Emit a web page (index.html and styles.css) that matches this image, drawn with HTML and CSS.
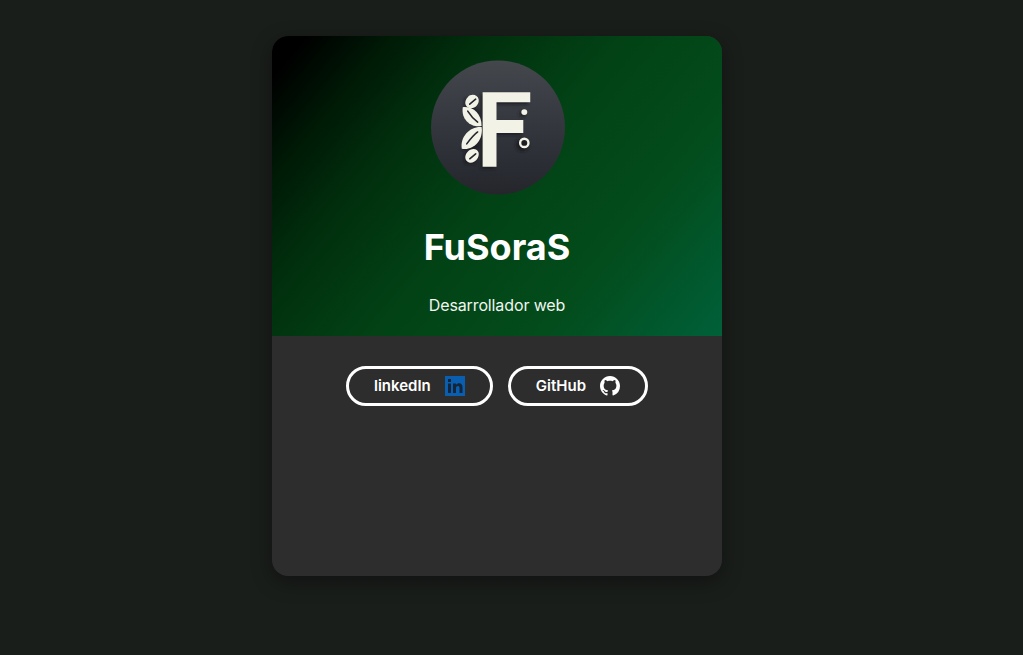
FILE: index.html
```html
<!DOCTYPE html>
<html lang="es">
<head>
<meta charset="utf-8">
<title>FuSoraS</title>
<link rel="stylesheet" href="styles.css">
</head>
<body>
<main class="card">
  <header class="hero">
    <svg class="avatar" viewBox="0 0 135 135" role="img" aria-label="Logo FuSoraS">
      <defs>
        <linearGradient id="disc" x1="0.5" y1="0" x2="0.5" y2="1">
          <stop offset="0" stop-color="#44474c"/>
          <stop offset="0.5" stop-color="#33363d"/>
          <stop offset="1" stop-color="#24262c"/>
        </linearGradient>
        <filter id="soft" x="-20%" y="-20%" width="140%" height="140%">
          <feGaussianBlur stdDeviation="1.5"/>
        </filter>
      </defs>
      <circle cx="67.5" cy="67.5" r="67.5" fill="url(#disc)"/>
      <g transform="translate(-2 2)" fill="#14161a" opacity="0.75" filter="url(#soft)">
        <path d="M52 32H100V42H66V60H93V73H66V107H52Z"/>
        <circle cx="94" cy="83" r="6.500"/>
        <circle cx="94" cy="52" r="3"/>
        <path d="M33 47L50 65V47Z M32 88L50 67V88Z M36 36H47V48H36Z M36 90H47V102H36Z"/>
      </g>
      <path class="mark" d="M52 32H100V42H66V60H93V73H66V107H52Z"/>
      <circle class="mark" cx="94" cy="52" r="3"/>
      <circle class="ring" cx="94" cy="83" r="4.200"/>
      <path class="mark" d="M37 37C40 33 47 34 48 39C49 44 44 49 39 48C34 47 33 41 37 37Z"/>
      <path class="mark" d="M32 47C42 46 51 53 51 66C41 68 30 60 32 47Z"/>
      <path class="mark" d="M31 89C29 76 40 66 51 67C53 80 43 91 31 89Z"/>
      <path class="mark" d="M37 92C40 88 47 88 48 93C49 98 44 104 39 103C34 102 33 96 37 92Z"/>
      <path class="rib" d="M39 44L45 39M37 51C40 56 43 59 47 62M36 84C39 80 43 75 47 72M39 99L45 94"/>
    </svg>
    <h1 class="name">FuSoraS</h1>
    <p class="role">Desarrollador web</p>
  </header>
  <nav class="links">
    <a class="pill" href="#">
      <span>linkedIn</span>
      <svg class="pill-icon" viewBox="0 0 20 20" aria-hidden="true">
        <rect width="20" height="20" fill="#0a5eb0"/>
        <path fill="#14253a" d="M3 7.500h3V17H3zM3 3h3v3H3zM8 7.500h3v1.300C11.700 7.900 12.700 7.300 14 7.300 16.700 7.300 17.500 9 17.500 11.500V17h-3v-5C14.500 10.800 14 10 13 10 11.800 10 11 10.800 11 12.200V17H8z"/>
      </svg>
    </a>
    <a class="pill" href="#">
      <span>GitHub</span>
      <svg class="pill-icon" viewBox="0 0 16 16" aria-hidden="true">
        <path fill="#fff" d="M8 0C3.580 0 0 3.580 0 8c0 3.540 2.290 6.530 5.470 7.590.4.070.55-.17.55-.38 0-.19-.01-.82-.01-1.490-2.010.37-2.530-.49-2.690-.94-.09-.23-.48-.94-.82-1.130-.28-.15-.68-.52-.01-.53.63-.01 1.080.58 1.230.82.720 1.210 1.870.87 2.330.66.070-.52.280-.87.510-1.070-1.780-.2-3.640-.89-3.640-3.950 0-.87.310-1.590.820-2.150-.08-.2-.36-1.020.08-2.120 0 0 .67-.21 2.200.82.640-.18 1.320-.27 2-.27s1.360.09 2 .27c1.530-1.040 2.200-.82 2.200-.82.440 1.100.16 1.920.08 2.120.51.560.82 1.270.82 2.150 0 3.070-1.870 3.750-3.650 3.950.29.250.54.730.54 1.480 0 1.070-.01 1.930-.01 2.200 0 .21.150.46.550.38A8.010 8.010 0 0 0 16 8c0-4.420-3.580-8-8-8z"/>
      </svg>
    </a>
  </nav>
</main>
</body>
</html>
```
FILE: styles.css
```css
* { box-sizing: border-box; }

html, body { height: 100%; }

body {
  margin: 0;
  background: #1a1e1b;
  font-family: "Inter", "Liberation Sans", sans-serif;
  color: #fff;
  display: flex;
  justify-content: center;
  padding: 36px 29px 0 0;
}

.card {
  width: 450px;
  height: 540px;
  border-radius: 16px;
  overflow: hidden;
  background: #2d2d2d;
  box-shadow: 0 6px 20px rgba(0, 0, 0, 0.4);
  display: flex;
  flex-direction: column;
}

.hero {
  height: 300px;
  padding-top: 24px;
  background: linear-gradient(130deg, #000 5%, #001a06 17%, #012f0d 30%, #024215 50%, #034c1c 74%, #006039 100%);
  display: flex;
  flex-direction: column;
  align-items: center;
}

.avatar { width: 134px; height: 135px; flex: none; margin-left: 2px; }
.mark { fill: #f3f2e6; }
.ring { fill: none; stroke: #f3f2e6; stroke-width: 2.400; }
.rib { fill: none; stroke: #24272d; stroke-width: 1.600; stroke-linecap: round; }

.name {
  margin: 32px 0 0;
  font-size: 36px;
  line-height: 40px;
  font-weight: 700;
}

.role {
  margin: 29px 0 0;
  font-size: 16px;
  line-height: 19px;
  letter-spacing: -0.12px;
  color: #f0f6f0;
}

.links {
  display: flex;
  justify-content: center;
  gap: 15px;
  padding-top: 30px;
}

.pill {
  height: 40px;
  padding: 0 25px;
  display: flex;
  align-items: center;
  gap: 14px;
  border: 3px solid #fff;
  border-radius: 20px;
  color: #fff;
  text-decoration: none;
  font-size: 15px;
  line-height: 18px;
  font-weight: 600;
}

.pill span { padding-bottom: 1px; }
.pill-icon { width: 20px; height: 20px; flex: none; }
```
